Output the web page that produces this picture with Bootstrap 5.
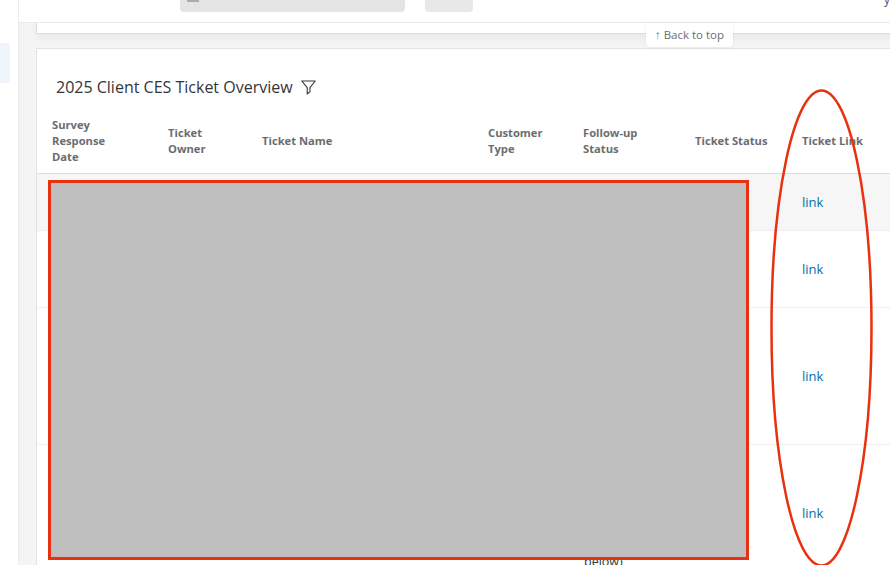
<!DOCTYPE html>
<html lang="en">
<head>
<meta charset="utf-8">
<title>Client CES Ticket Overview</title>
<link href="https://cdn.jsdelivr.net/npm/bootstrap@5.3.0/dist/css/bootstrap.min.css" rel="stylesheet">
<style>
html,body{height:565px;overflow:hidden;background:#fff;font-family:"Open Sans","Noto Sans",sans-serif;}
.stage{position:relative;width:890px;height:565px;overflow:hidden;}
.rail{width:19px;flex:none;border-right:1px solid #ececec;padding-top:43px;background:#fff;}
.rail-active{width:10px;height:40px;background:#eef4fc;border-radius:0 4px 4px 0;}
.mainpane{flex:1;min-width:0;background:#f4f4f4;}
.topstrip{height:23px;background:#fff;border-bottom:1px solid #ececec;padding:0 0 10px 161px;gap:20px;}
.fake-field{width:225px;height:13px;background:#e4e4e4;border-radius:0 0 4px 4px;padding-left:7px;}
.fake-ico{width:12px;height:3px;background:#ababab;display:block;}
.fake-btn{width:48px;height:13px;background:#e8e8e8;border-radius:0 0 4px 4px;}
.top-frag{position:absolute;right:0;top:-9px;font-size:12px;color:#555;}
.upper-card{height:11px;margin:0 -10px 0 17px;background:#fff;border:1px solid #dcdcdc;border-top:0;box-shadow:0 4px 10px rgba(0,0,0,.05);}
.ticket-card{margin:14px -10px 0 17px;background:#fff;border:1px solid #e2e2e2;border-bottom:0;height:600px;}
.card-title-row{padding:27px 0 0 19px;height:68px;gap:8px;}
.card-title-row h2{font-size:16px;line-height:22px;margin:0;color:#32363a;font-weight:400;}
.ticket-table{table-layout:fixed;width:853px;margin:0;}
.ticket-table th{font-size:11.2px;line-height:16px;font-weight:700;color:#6a6d70;padding:0 4px 8px 0;height:56px;vertical-align:middle;border-bottom:1px solid #dedede;background:#fff;}
.ticket-table th:first-child{padding-left:15px;padding-right:50px;}
.ticket-table td:first-child{padding-left:15px;}
.ticket-table td{font-size:13px;line-height:16px;padding:0;vertical-align:middle;border-bottom:1px solid #efefef;background:#fff;color:#32363a;}
.ticket-table tr.row-hi td{background:#f6f6f6;}
.ticket-table a{color:#0070a8;text-decoration:none;}
.r1{height:57px;}.r2{height:77px;}.r3{height:137px;}.r4{height:136px;}
.cut-note{position:absolute;left:584px;top:554px;font-size:12.500px;line-height:16px;color:#32363a;}
.to-top{position:absolute;left:646px;top:23px;width:87px;height:24px;background:#fff;border-radius:0 0 4px 4px;box-shadow:0 0 2px rgba(0,0,0,.12);font-size:11.500px;line-height:24px;text-align:center;color:#6a6d70;}
.mask-box{position:absolute;left:48px;top:180px;width:701px;height:380px;background:#bfbfbf;border:3px solid #e8320f;}
.mark-oval{position:absolute;left:770px;top:89px;pointer-events:none;}
</style>
</head>
<body>
<div class="stage">
  <div class="d-flex h-100">
    <div class="rail"><div class="rail-active"></div></div>
    <div class="mainpane">
      <div class="topstrip d-flex align-items-end">
        <div class="fake-field"><span class="fake-ico"></span></div>
        <div class="fake-btn"></div>
      </div>
      <div class="upper-card"></div>
      <div class="ticket-card">
        <div class="card-title-row d-flex align-items-start">
          <h2>2025 Client CES Ticket Overview</h2>
          <svg class="mt-1" width="15" height="15" viewBox="0 0 15 15" fill="none" stroke="#32363a" stroke-width="1.1" stroke-linejoin="round" aria-hidden="true"><path d="M.8 1H14.2L9 7.6V11.6L6.2 14V7.6Z"/></svg>
        </div>
        <table class="table ticket-table">
          <colgroup><col style="width:131px"><col style="width:94px"><col style="width:226px"><col style="width:95px"><col style="width:112px"><col style="width:107px"><col></colgroup>
          <thead>
            <tr>
              <th>Survey Response Date</th>
              <th>Ticket<br>Owner</th>
              <th>Ticket Name</th>
              <th>Customer<br>Type</th>
              <th>Follow-up<br>Status</th>
              <th>Ticket Status</th>
              <th>Ticket Link</th>
            </tr>
          </thead>
          <tbody>
            <tr class="r1 row-hi"><td></td><td></td><td></td><td></td><td></td><td></td><td><a href="#">link</a></td></tr>
            <tr class="r2"><td></td><td></td><td></td><td></td><td></td><td></td><td><a href="#">link</a></td></tr>
            <tr class="r3"><td></td><td></td><td></td><td></td><td></td><td></td><td><a href="#">link</a></td></tr>
            <tr class="r4"><td></td><td></td><td></td><td></td><td></td><td></td><td><a href="#">link</a></td></tr>
          </tbody>
        </table>
      </div>
    </div>
  </div>
  <div class="cut-note">below)</div>
  <div class="top-frag">y</div>
  <div class="to-top">↑ Back to top</div>
  <div class="mask-box"></div>
  <svg class="mark-oval" width="104" height="480" viewBox="0 0 104 480" fill="none" aria-hidden="true"><ellipse cx="51.5" cy="239" rx="50" ry="237.500" stroke="#e8320f" stroke-width="2.500"/></svg>
</div>
<script src="https://cdn.jsdelivr.net/npm/bootstrap@5.3.0/dist/js/bootstrap.bundle.min.js"></script>
</body>
</html>
